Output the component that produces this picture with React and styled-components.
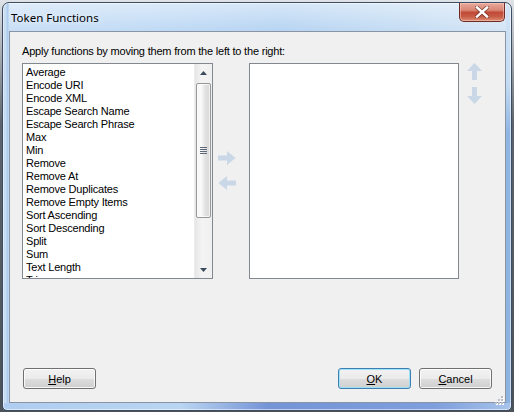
import React from "react";
import styled, { createGlobalStyle } from "styled-components";

const GlobalStyle = createGlobalStyle`
  html, body { margin: 0; padding: 0; }
  body {
    width: 514px;
    height: 412px;
    overflow: hidden;
    background: linear-gradient(#dfe3e8, #5d646d 30%, #4b525a);
    font-family: "Liberation Sans", Arial, sans-serif;
  }
`;

const Window = styled.div`
  box-sizing: border-box;
  margin: 2px 0 0 2px;
  width: 510px;
  height: 409px;
  border: 1px solid #3d4c60;
  border-radius: 7px 7px 5px 5px;
  padding: 0 5px 7px 6px;
  display: flex;
  flex-direction: column;
  background:
    linear-gradient(to right, #aecdf0 0%, #bad5f1 35%, #7594d8 52%, #7f9edd 85%, #a6c4ea 100%) bottom / 100% 7px no-repeat,
    linear-gradient(#d2e4f6 0%, #c3dbf3 20%, #8fb5e2 32%, #8cb2e0 100%) right / 5px 100% no-repeat,
    linear-gradient(to right, #b9d3ee 0, #cfe2f6 3px, #a7c7ea 4px, #c3dbf3 6px) left / 6px 100% no-repeat,
    linear-gradient(rgba(255,255,255,0.45), rgba(255,255,255,0) 30px),
    linear-gradient(to right, #c6ddf5 0%, #bed9f5 30%, #b5d3f2 55%, #c4dcf3 80%, #d4e5f6 100%);
  box-shadow: inset 0 0 0 1px rgba(255,255,255,0.55);
`;

const TitleBar = styled.div`
  height: 28px;
  display: flex;
  align-items: center;
  flex-shrink: 0;
`;

const TitleText = styled.span`
  padding-left: 2px;
  font-family: "Noto Sans", "Open Sans", sans-serif;
  font-size: 11.5px;
  color: #000;
  text-shadow: 0 0 6px rgba(255,255,255,0.9);
  flex: 1;
`;

const CloseButton = styled.div`
  align-self: flex-start;
  margin-right: 1px;
  width: 46px;
  height: 19px;
  box-sizing: border-box;
  border: 1px solid #6f2a23;
  border-top: none;
  border-radius: 0 0 5px 5px;
  background: linear-gradient(#e9a99b 0%, #d98775 40%, #c14a37 52%, #c75c45 75%, #dc8f73 100%);
  box-shadow: inset 0 0 0 1px rgba(255,220,210,0.45);
  display: flex;
  align-items: center;
  justify-content: center;
`;

const Client = styled.div`
  position: relative;
  flex: 1;
  box-sizing: border-box;
  border: 1px solid #8995a5;
  background: #f0f0f0;
  display: flex;
  flex-direction: column;
  padding: 13px 13px 13px 12px;
`;

const Label = styled.div`
  font-size: 11px;
  line-height: 13px;
  letter-spacing: -0.2px;
  color: #000;
  margin-bottom: 5px;
`;

const Row = styled.div`
  display: flex;
  align-items: flex-start;
`;

const ListBox = styled.div`
  box-sizing: border-box;
  width: ${(p) => p.$w}px;
  height: 216px;
  border: 1px solid #828790;
  background: #fff;
  display: flex;
  overflow: hidden;
`;

const Items = styled.div`
  flex: 1;
  padding: 2px 0 0 3px;
  overflow: hidden;
`;

const Item = styled.div`
  font-size: 11px;
  line-height: 13px;
  letter-spacing: -0.2px;
  color: #000;
  white-space: nowrap;
`;

const ScrollBar = styled.div`
  width: 17px;
  flex-shrink: 0;
  display: flex;
  flex-direction: column;
  background: linear-gradient(to right, #e6e6e6, #f4f4f4 40%, #f0f0f0);
  border-left: 1px solid #ececec;
`;

const ScrollArrow = styled.div`
  height: 17px;
  flex-shrink: 0;
  display: flex;
  align-items: center;
  justify-content: center;
`;

const Track = styled.div`
  flex: 1;
  padding: 2px 1px;
  display: flex;
  flex-direction: column;
`;

const Thumb = styled.div`
  box-sizing: border-box;
  height: 135px;
  border: 1px solid #979797;
  border-radius: 2px;
  background: linear-gradient(to right, #f3f3f3, #fbfbfb 30%, #e4e4e4 60%, #d6d6d6);
  box-shadow: inset 0 0 0 1px rgba(255,255,255,0.7);
  display: flex;
  align-items: center;
  justify-content: center;
`;

const MoveColumn = styled.div`
  width: 18px;
  margin: 88px 13px 0 5px;
  display: flex;
  flex-direction: column;
  gap: 11px;
`;

const OrderColumn = styled.div`
  width: 15px;
  margin: 0 0 0 8px;
  display: flex;
  flex-direction: column;
  gap: 7px;
`;

const Spacer = styled.div`
  flex: 1;
`;

const ButtonRow = styled.div`
  display: flex;
  align-items: center;
  padding-left: 1px;
`;

const Button = styled.div`
  box-sizing: border-box;
  width: 73px;
  height: 21px;
  border: 1px solid ${(p) => (p.$default ? "#3c7fb1" : "#707070")};
  border-radius: 3px;
  background: linear-gradient(#f2f2f2 0%, #ebebeb 50%, #dddddd 51%, #cfcfcf 100%);
  box-shadow: inset 0 0 0 1px ${(p) => (p.$default ? "#9fe1f7" : "rgba(255,255,255,0.8)")};
  display: flex;
  align-items: center;
  justify-content: center;
  font-size: 11px;
  color: #000;
  margin-left: ${(p) => p.$ml || 0}px;
`;

const Mnemonic = styled.span`
  text-decoration: underline;
  text-underline-offset: 1px;
`;

const Grip = styled.div`
  position: absolute;
  right: 1px;
  bottom: 1px;
  width: 10px;
  height: 10px;
`;

const ITEMS = [
  "Average",
  "Encode URI",
  "Encode XML",
  "Escape Search Name",
  "Escape Search Phrase",
  "Max",
  "Min",
  "Remove",
  "Remove At",
  "Remove Duplicates",
  "Remove Empty Items",
  "Sort Ascending",
  "Sort Descending",
  "Split",
  "Sum",
  "Text Length",
  "Trim",
];

const ARROW = "#c9d7e7";

function ArrowRight() {
  return (
    <svg width="18" height="14" viewBox="0 0 18 14">
      <polygon points="0,4.5 9,4.5 9,0 17.5,7 9,14 9,9.5 0,9.5" fill={ARROW} />
    </svg>
  );
}
function ArrowLeft() {
  return (
    <svg width="18" height="14" viewBox="0 0 18 14">
      <polygon points="18,4.5 9,4.5 9,0 0.5,7 9,14 9,9.5 18,9.5" fill={ARROW} />
    </svg>
  );
}
function ArrowUp() {
  return (
    <svg width="15" height="17" viewBox="0 0 15 17">
      <polygon points="5,17 5,8 0,8 7.5,0 15,8 10,8 10,17" fill={ARROW} />
    </svg>
  );
}
function ArrowDown() {
  return (
    <svg width="15" height="17" viewBox="0 0 15 17">
      <polygon points="5,0 5,9 0,9 7.5,17 15,9 10,9 10,0" fill={ARROW} />
    </svg>
  );
}

function SmallTri({ down }) {
  return (
    <svg width="7" height="4" viewBox="0 0 7 4">
      <polygon points={down ? "0,0 7,0 3.5,4" : "0,4 7,4 3.5,0"} fill="#3b4a5c" />
    </svg>
  );
}

function GripLines() {
  return (
    <svg width="7" height="7" viewBox="0 0 7 7">
      {[0, 2, 4, 6].map((y) => (
        <rect key={y} x="0" y={y} width="7" height="1" fill="#5f6a78" />
      ))}
    </svg>
  );
}

function CloseX() {
  return (
    <svg width="14" height="12" viewBox="0 0 14 12">
      <path
        d="M2 1.5 L12 10.5 M12 1.5 L2 10.5"
        stroke="#4a1f1a"
        strokeWidth="4.2"
        strokeLinecap="square"
        opacity="0.55"
      />
      <path d="M2 1.5 L12 10.5 M12 1.5 L2 10.5" stroke="#fff" strokeWidth="2.4" strokeLinecap="square" />
    </svg>
  );
}

function ResizeGrip() {
  const dots = [
    [7, 1],
    [4, 4],
    [7, 4],
    [1, 7],
    [4, 7],
    [7, 7],
  ];
  return (
    <svg width="10" height="10" viewBox="0 0 10 10">
      {dots.map(([x, y]) => (
        <g key={`${x}-${y}`}>
          <rect x={x + 1} y={y + 1} width="2" height="2" fill="#fff" />
          <rect x={x} y={y} width="2" height="2" fill="#b9bec5" />
        </g>
      ))}
    </svg>
  );
}

export default function App() {
  return (
    <>
      <GlobalStyle />
      <Window>
        <TitleBar>
          <TitleText>Token Functions</TitleText>
          <CloseButton>
            <CloseX />
          </CloseButton>
        </TitleBar>
        <Client>
          <Label>Apply functions by moving them from the left to the right:</Label>
          <Row>
            <ListBox $w={191}>
              <Items>
                {ITEMS.map((t) => (
                  <Item key={t}>{t}</Item>
                ))}
              </Items>
              <ScrollBar>
                <ScrollArrow>
                  <SmallTri />
                </ScrollArrow>
                <Track>
                  <Thumb>
                    <GripLines />
                  </Thumb>
                </Track>
                <ScrollArrow>
                  <SmallTri down />
                </ScrollArrow>
              </ScrollBar>
            </ListBox>
            <MoveColumn>
              <ArrowRight />
              <ArrowLeft />
            </MoveColumn>
            <ListBox $w={210} />
            <OrderColumn>
              <ArrowUp />
              <ArrowDown />
            </OrderColumn>
          </Row>
          <Spacer />
          <ButtonRow>
            <Button>
              <span>
                <Mnemonic>H</Mnemonic>elp
              </span>
            </Button>
            <Spacer />
            <Button $default>
              <span>
                <Mnemonic>O</Mnemonic>K
              </span>
            </Button>
            <Button $ml={8}>
              <span>
                <Mnemonic>C</Mnemonic>ancel
              </span>
            </Button>
          </ButtonRow>
          <Grip>
            <ResizeGrip />
          </Grip>
        </Client>
      </Window>
    </>
  );
}
